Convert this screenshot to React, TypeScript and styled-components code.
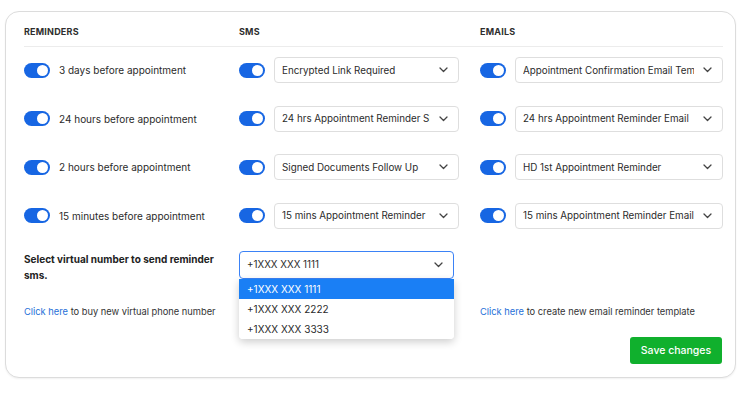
import React from "react";
import styled, { createGlobalStyle } from "styled-components";

const Global = createGlobalStyle`
  html, body {
    margin: 0;
    padding: 0;
    background: #ffffff;
    font-family: Inter, "Open Sans", "Liberation Sans", sans-serif;
    color: #2b2b2b;
  }
  * { box-sizing: border-box; }
`;

const Page = styled.div`
  padding: 11px 5px 16px 5px;
`;

const Card = styled.div`
  position: relative;
  border: 1px solid #dcdcdc;
  border-radius: 14px;
  padding: 13px 13px 13px 18px;
  box-shadow: 0 1px 2px rgba(0, 0, 0, 0.06);
  background: #fff;
`;

const Grid = styled.div`
  display: grid;
  grid-template-columns: 215px 241px 243px;
`;

const Head = styled.div`
  font-size: 9px;
  font-weight: 700;
  letter-spacing: 0.2px;
  text-transform: uppercase;
  color: #2e2e2e;
  height: 22px;
  line-height: 14px;
  border-bottom: 1px solid #ececec;
  margin-bottom: 10px;
`;

const Cell = styled.div`
  display: flex;
  align-items: center;
  gap: 9px;
  height: 26px;
  margin-bottom: 22.5px;
`;

const Label = styled.span`
  font-size: 10px;
  color: #2b2b2b;
`;

const Toggle = styled.span`
  flex: none;
  width: 26px;
  height: 15px;
  border-radius: 8px;
  background: #1766e3;
  position: relative;
  &::after {
    content: "";
    position: absolute;
    right: 2px;
    top: 2px;
    width: 11px;
    height: 11px;
    border-radius: 50%;
    background: #fff;
  }
`;

const Select = styled.div<{ $w: number; $focus?: boolean }>`
  width: ${(p) => p.$w}px;
  height: ${(p) => (p.$focus ? 28 : 26)}px;
  border: 1px solid ${(p) => (p.$focus ? "#3b82f6" : "#dedede")};
  border-radius: 4px;
  display: flex;
  align-items: center;
  padding: 0 10px 0 7px;
  gap: 9px;
  background: #fff;
`;

const SelectText = styled.span`
  flex: 1;
  font-size: 9.8px;
  color: #2b2b2b;
  white-space: nowrap;
  overflow: hidden;
`;

const Chevron = () => (
  <svg width="9" height="6" viewBox="0 0 9 6" fill="none">
    <path d="M1 1l3.5 3.5L8 1" stroke="#444" strokeWidth="1.3" strokeLinecap="round" strokeLinejoin="round" />
  </svg>
);

const Bottom = styled.div`
  display: grid;
  grid-template-columns: 215px 241px 243px;
  margin-top: -0.5px;
`;

const Bold = styled.div`
  font-size: 10px;
  font-weight: 700;
  line-height: 16px;
  color: #222;
`;

const SelectWrap = styled.div`
  position: relative;
`;

const Menu = styled.div`
  position: absolute;
  left: 0;
  top: 28px;
  width: 215px;
  background: #fff;
  border-radius: 0 0 4px 4px;
  box-shadow: 0 3px 8px rgba(0, 0, 0, 0.2);
  z-index: 2;
  overflow: hidden;
`;

const Option = styled.div<{ $active?: boolean }>`
  height: 20px;
  line-height: 20px;
  padding-left: 8px;
  font-size: 10px;
  background: ${(p) => (p.$active ? "#1a7ff5" : "#fff")};
  color: ${(p) => (p.$active ? "#fff" : "#2b2b2b")};
`;

const LinkLine = styled.div`
  font-size: 9.3px;
  color: #333;
  margin-top: 23px;
  white-space: nowrap;
`;

const A = styled.span`
  color: #1f6fd8;
`;

const Footer = styled.div`
  display: flex;
  justify-content: flex-end;
  margin-top: 20px;
`;

const Save = styled.button`
  width: 92px;
  height: 27px;
  border: none;
  border-radius: 3px;
  background: #10b02d;
  color: #fff;
  font-family: inherit;
  font-size: 10.5px;
  font-weight: 500;
`;

const reminders = [
  "3 days before appointment",
  "24 hours before appointment",
  "2 hours before appointment",
  "15 minutes before appointment",
];
const sms = [
  "Encrypted Link Required",
  "24 hrs Appointment Reminder SMS",
  "Signed Documents Follow Up",
  "15 mins Appointment Reminder",
];
const emails = [
  "Appointment Confirmation Email Template",
  "24 hrs Appointment Reminder Email",
  "HD 1st Appointment Reminder",
  "15 mins Appointment Reminder Email",
];

export default function App() {
  return (
    <Page>
      <Global />
      <Card>
        <Grid>
          <Head>Reminders</Head>
          <Head>SMS</Head>
          <Head>Emails</Head>
          {reminders.map((r, i) => (
            <React.Fragment key={r}>
              <Cell>
                <Toggle />
                <Label>{r}</Label>
              </Cell>
              <Cell>
                <Toggle />
                <Select $w={185}>
                  <SelectText>{sms[i]}</SelectText>
                  <Chevron />
                </Select>
              </Cell>
              <Cell>
                <Toggle />
                <Select $w={208}>
                  <SelectText>{emails[i]}</SelectText>
                  <Chevron />
                </Select>
              </Cell>
            </React.Fragment>
          ))}
        </Grid>
        <Bottom>
          <div>
            <Bold>
              Select virtual number to send reminder
              <br />
              sms.
            </Bold>
            <LinkLine>
              <A>Click here</A> to buy new virtual phone number
            </LinkLine>
          </div>
          <SelectWrap>
            <Select $w={215} $focus>
              <SelectText>+1XXX XXX 1111</SelectText>
              <Chevron />
            </Select>
            <Menu>
              <Option $active>+1XXX XXX 1111</Option>
              <Option>+1XXX XXX 2222</Option>
              <Option>+1XXX XXX 3333</Option>
            </Menu>
          </SelectWrap>
          <div>
            <Bold>&nbsp;</Bold>
            <Bold>&nbsp;</Bold>
            <LinkLine>
              <A>Click here</A> to create new email reminder template
            </LinkLine>
          </div>
        </Bottom>
        <Footer>
          <Save>Save changes</Save>
        </Footer>
      </Card>
    </Page>
  );
}
